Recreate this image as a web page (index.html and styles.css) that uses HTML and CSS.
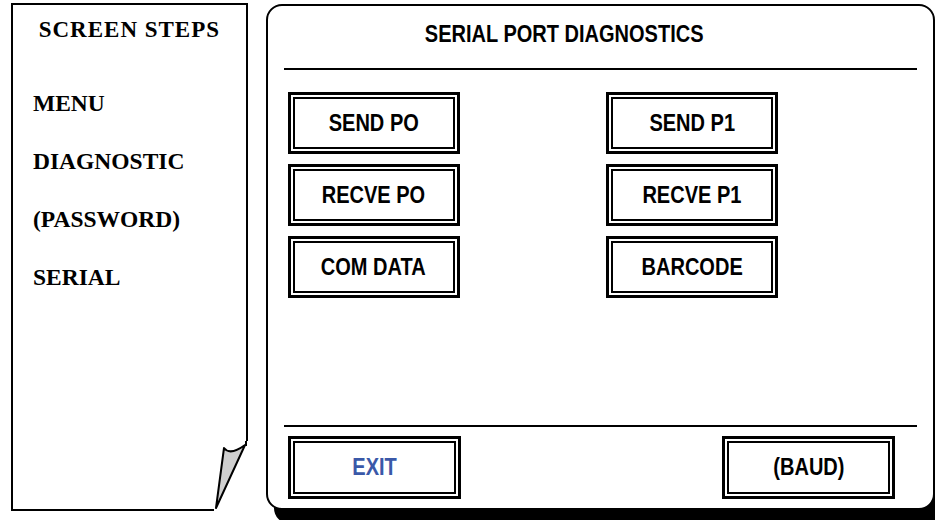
FILE: index.html
```html
<!DOCTYPE html>
<html lang="en">
<head>
  <meta charset="UTF-8">
  <meta name="viewport" content="width=device-width, initial-scale=1.0">
  <title>Serial Port Diagnostics</title>
  <link rel="stylesheet" href="styles.css">
</head>
<body>
  <div class="page">
    <!-- Screen steps sheet -->
    <aside class="steps">
      <h2 class="steps-title">SCREEN STEPS</h2>
      <ul class="steps-list">
        <li>MENU</li>
        <li>DIAGNOSTIC</li>
        <li>(PASSWORD)</li>
        <li>SERIAL</li>
      </ul>
      <svg class="curl" width="34" height="70" viewBox="0 0 34 70">
        <polygon points="30,0 34,0 34,70 0,70 0,66 2,66" fill="#fff"/>
        <path d="M10 7 Q 16 15 31 4 L 2 67 Z" fill="#cfcfcf" stroke="#000" stroke-width="2" stroke-linejoin="round"/>
        <line x1="32" y1="0" x2="32" y2="5" stroke="#000" stroke-width="2"/>
      </svg>
    </aside>

    <!-- Diagnostic screen -->
    <main class="screen">
      <h1 class="screen-title"><span class="narrow">SERIAL PORT DIAGNOSTICS</span></h1>
      <div class="rule"></div>

      <div class="keys">
        <div class="key"><div class="key-face"><span class="narrow">SEND PO</span></div></div>
        <div class="key"><div class="key-face"><span class="narrow">SEND P1</span></div></div>
        <div class="key"><div class="key-face"><span class="narrow">RECVE PO</span></div></div>
        <div class="key"><div class="key-face"><span class="narrow">RECVE P1</span></div></div>
        <div class="key"><div class="key-face"><span class="narrow">COM DATA</span></div></div>
        <div class="key"><div class="key-face"><span class="narrow">BARCODE</span></div></div>
      </div>

      <div class="rule"></div>
      <div class="footer-keys">
        <div class="key key-exit"><div class="key-face"><span class="narrow">EXIT</span></div></div>
        <div class="key"><div class="key-face"><span class="narrow">(BAUD)</span></div></div>
      </div>
    </main>
  </div>
</body>
</html>
```

FILE: styles.css
```css
* {
  margin: 0;
  padding: 0;
  box-sizing: border-box;
}

body {
  background: #fff;
  color: #000;
  width: 935px;
  height: 520px;
  overflow: hidden;
}

.page {
  display: flex;
  align-items: flex-start;
  padding: 3px 0 0 11px;
}

/* Left sheet - Screen Steps */
.steps {
  position: relative;
  width: 237px;
  height: 508px;
  border: 2px solid #000;
  padding: 11px 0 0 20px;
  font-family: "Liberation Serif", "Times New Roman", serif;
  font-weight: bold;
}

.steps-title {
  font-size: 23px;
  line-height: 28px;
  letter-spacing: 1px;
  text-align: center;
  margin-left: -20px;
  margin-bottom: 45px;
}

.steps-list {
  list-style: none;
  display: flex;
  flex-direction: column;
  gap: 30px;
  font-size: 23.5px;
  line-height: 28px;
}

/* Page curl in the corner */
.curl {
  position: absolute;
  right: -2px;
  bottom: -2px;
  display: block;
}

/* Right panel - Diagnostics screen */
.screen {
  width: 670px;
  height: 506px;
  margin-left: 18px;
  margin-top: 1px;
  border: 2px solid #000;
  border-radius: 16px;
  box-shadow: 8px 14px 0 #000;
  background: #fff;
  display: flex;
  flex-direction: column;
  font-family: "Liberation Sans", Arial, sans-serif;
  font-weight: bold;
}

/* condensed lettering like Arial Narrow */
.narrow {
  display: inline-block;
  font-size: 23px;
  transform: scaleX(0.87);
  white-space: nowrap;
}

.screen-title {
  height: 62px;
  font-size: 23px;
  line-height: 56px;
  text-align: center;
  padding-right: 72px;
}

.rule {
  height: 2px;
  background: #000;
  margin: 0 16px;
}

.keys {
  display: grid;
  grid-template-columns: 172px 172px;
  grid-auto-rows: 62px;
  column-gap: 146px;
  row-gap: 10px;
  padding-left: 20px;
  margin-top: 22px;
  flex: 1;
}

.footer-keys {
  display: flex;
  justify-content: space-between;
  padding: 9px 38px 0 20px;
  height: 81px;
}

.key {
  width: 172px;
  height: 62px;
  border: 3px solid #000;
  padding: 2px;
}

.footer-keys .key {
  width: 173px;
  height: 63px;
}

.key-face {
  display: flex;
  align-items: center;
  justify-content: center;
  height: 100%;
  border: 2px solid #000;
}

.key-exit .key-face {
  color: #3a58a8;
}
```
